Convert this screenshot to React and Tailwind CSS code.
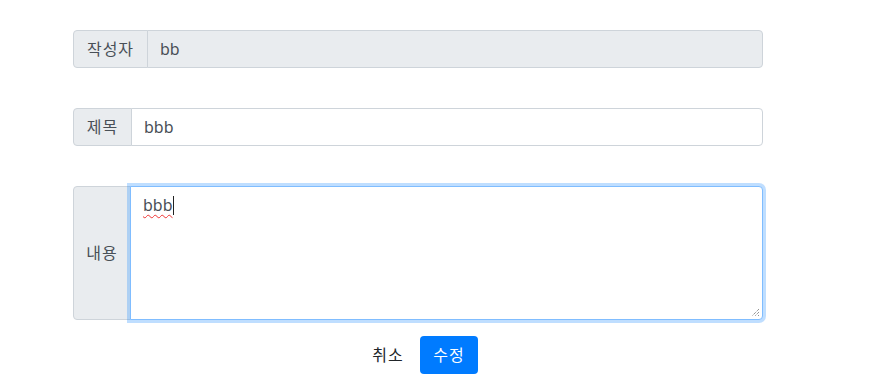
import React from 'react';

const font = { fontFamily: '"Noto Sans", "Noto Sans CJK KR", sans-serif' };

const Label = ({ children, className = '' }) => (
  <div
    className={`flex items-center justify-center bg-[#e9ecef] border border-[#ced4da] rounded-l text-[16px] leading-6 text-[#495057] tracking-[1px] ${className}`}
  >
    {children}
  </div>
);

export default function App() {
  return (
    <div className="min-h-screen bg-white pt-[30px] pl-[73px]" style={font}>
      <div className="w-[690px] flex flex-col">
        {/* 작성자 */}
        <div className="flex h-[38px]">
          <Label className="w-[75px]">작성자</Label>
          <div className="flex-1 flex items-center px-3 -ml-px bg-[#e9ecef] border border-[#ced4da] rounded-r text-[16px] leading-6 text-[#495057]">
            bb
          </div>
        </div>

        {/* 제목 */}
        <div className="flex h-[38px] mt-10">
          <Label className="w-[59px]">제목</Label>
          <div className="flex-1 flex items-center px-3 -ml-px bg-white border border-[#ced4da] rounded-r text-[16px] leading-6 text-[#495057]">
            bbb
          </div>
        </div>

        {/* 내용 */}
        <div className="flex h-[134px] mt-10">
          <Label className="w-[58px]">내용</Label>
          <div className="relative flex-1 -ml-px bg-white border border-[#80bdff] rounded-r shadow-[0_0_0_3px_rgba(0,123,255,0.25)] px-3 py-1.5 text-[16px] leading-6 text-[#495057]">
            <span className="underline decoration-wavy decoration-[#e33] decoration-1 underline-offset-[3px]">bbb</span>
            <span className="inline-block w-px h-[19px] bg-[#222] align-[-4px]" />
            <svg className="absolute right-[2px] bottom-[2px]" width="9" height="9" viewBox="0 0 9 9">
              <path d="M8 1 L1 8 M8 4 L4 8 M8 7 L7 8" stroke="#666" strokeWidth="1" strokeDasharray="1 1" />
            </svg>
          </div>
        </div>

        {/* buttons */}
        <div className="flex justify-center gap-1 mt-4 pl-[2px]">
          <button className="h-[38px] w-[56px] rounded text-[16px] leading-6 text-[#212529] bg-transparent tracking-[1px]" style={font}>
            취소
          </button>
          <button className="h-[38px] w-[58px] rounded text-[16px] leading-6 text-white bg-[#007bff] tracking-[1px]" style={font}>
            수정
          </button>
        </div>
      </div>
    </div>
  );
}
